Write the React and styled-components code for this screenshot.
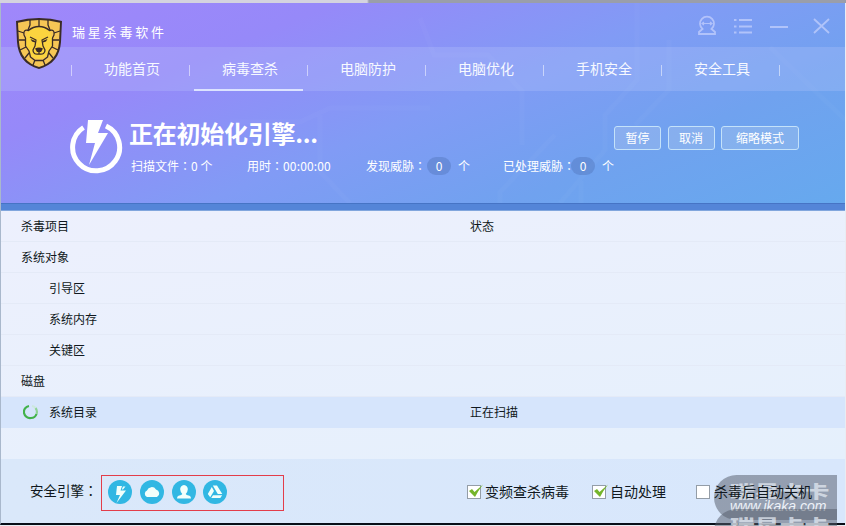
import styled, { createGlobalStyle, css } from "styled-components";

const tabs = ["功能首页", "病毒查杀", "电脑防护", "电脑优化", "手机安全", "安全工具"];

const rows = [
  { title: "系统对象" },
  { title: "引导区", child: true },
  { title: "系统内存", child: true },
  { title: "关键区", child: true },
  { title: "磁盘" },
  { title: "系统目录", child: true, active: true, status: "正在扫描" },
];

export default function App() {
  return (
    <>
      <GlobalStyle />
      <Desktop>
        <BackStrip />
        <Window>
          <Header>
            <Circuit />
            <TitleBar>
              <LionLogo />
              <AppName>瑞星杀毒软件</AppName>
              <WindowTools />
            </TitleBar>
            <Nav>
              {tabs.map((tab, i) => (
                <Tab key={tab}>
                  <TabLabel $active={i === 1}>{tab}</TabLabel>
                </Tab>
              ))}
              <TabEnd />
            </Nav>
            <Hero>
              <ScanIcon />
              <Info>
                <Heading>正在初始化引擎...</Heading>
                <Stats>
                  <Stat $width={116}>
                    扫描文件<Colon>：</Colon>0 个
                  </Stat>
                  <Stat $width={119}>
                    用时<Colon>：</Colon>
                    <Time>00:00:00</Time>
                  </Stat>
                  <Stat $width={137}>
                    发现威胁<Colon>：</Colon>
                    <Count>0</Count>个
                  </Stat>
                  <Stat $width={120}>
                    已处理威胁<Colon>：</Colon>
                    <Count $tight>0</Count>个
                  </Stat>
                </Stats>
              </Info>
              <Actions>
                <Button>暂停</Button>
                <Button>取消</Button>
                <Button $wide>缩略模式</Button>
              </Actions>
            </Hero>
          </Header>
          <Divider />
          <List>
            <Row>
              <Name>杀毒项目</Name>
              <Status>状态</Status>
            </Row>
            {rows.map((row) => (
              <Row key={row.title} $active={row.active}>
                <Name $child={row.child}>
                  {row.active && <Spinner />}
                  {row.title}
                </Name>
                <Status>{row.status}</Status>
              </Row>
            ))}
          </List>
          <Footer>
            <EngineLabel>
              安全引擎<Colon>：</Colon>
            </EngineLabel>
            <EngineBox>
              <EngineIcons />
            </EngineBox>
            <Option $width={125}>
              <CheckBox checked />
              变频查杀病毒
            </Option>
            <Option $width={104}>
              <CheckBox checked />
              自动处理
            </Option>
            <Option $width={130}>
              <CheckBox />
              杀毒后自动关机
            </Option>
          </Footer>
        </Window>
        <Watermark $top={475}>
          <MarkName>瑞星卡卡</MarkName>
          <MarkUrl>www.ikaka.com</MarkUrl>
        </Watermark>
        <Watermark $top={509}>
          <MarkName>瑞星卡卡</MarkName>
        </Watermark>
      </Desktop>
    </>
  );
}

function LionLogo() {
  return (
    <Logo width="48" height="53" viewBox="0 0 48 53">
      <path
        d="M1 4Q12 1 24 1Q36 1 47 4Q46.5 14 46 25C45 39 38 48 24 52C10 48 3 39 2 25Q1.5 14 1 4Z"
        fill="#3a2b26"
      />
      <path
        d="M3 5.8Q13 3 24 3Q35 3 45 5.8Q44.5 16 44 25C43 38 36 46.5 24 50C12 46.5 5 38 4 25Q3.5 16 3 5.8Z"
        fill="#f6c655"
      />
      <path
        d="M13 14Q18 10 24 10Q30 10 35 14L37 21L37 29L33 35L31 40L24 42L17 40L15 35L11 29L11 21Z"
        fill="#fbd43f"
      />
      <g fill="none" stroke="#3a2b26" strokeWidth="1.3" strokeLinejoin="round">
        <path d="M13.5 13.5Q18 9.5 24 9.5Q30 9.5 34.5 13.5Q40 12 39 18L37.5 21V29L34 34L32.5 40L28 43.5H20L15.5 40L14 34L10.5 29V21L9 18Q8 12 13.5 13.5Z" />
        <path d="M15 3V8L13 13M24 2V9M33 3V8L35 13M3 14L9 16M45 14L39 16M4 23H10M44 23H38M5 33L11 30M43 33L37 30M10 41L14 36M38 41L34 36M18 48L20 43M30 48L28 43" />
        <path d="M15 20L21 23L20 29L18 33Q18 38 24 37Q30 38 30 33L28 29L27 23L33 20M24 34V37" />
      </g>
      <path d="M15.5 22L20.5 24L20 25.5L17 24.5ZM32.5 22L27.5 24L28 25.5L31 24.5ZM20 31.5Q24 29.5 28 31.5L26 35H22Z" fill="#3a2b26" />
    </Logo>
  );
}

function WindowTools() {
  return (
    <Tools width="136" height="24" viewBox="696 14 136 24">
      <path d="M702.5 29A7 7 0 1 1 711.5 29L715 32V34H699V32Z" />
      <path d="M702 23.5H712M704 22L702 23.5L704 25M710 22L712 23.5L710 25" strokeWidth="1.2" />
      <path d="M734 20H736.5M734 26.5H736.5M734 32.5H736.5M739 20H752M739 26.5H752M739 32.5H752" />
      <path d="M770 27H788M814 19L829 33M829 19L814 33" />
    </Tools>
  );
}

function ScanIcon() {
  return (
    <ScanSvg width="54" height="56" viewBox="70 119 54 56">
      <path
        d="M83.5 127.5A23.5 23.5 0 1 0 106 126"
        fill="none"
        stroke="#fff"
        strokeWidth="5"
      />
      <path d="M88 120H103L98 133H108L89 165L95 143H86Z" fill="#fff" />
    </ScanSvg>
  );
}

function Spinner() {
  return (
    <SpinnerSvg width="16" height="16" viewBox="0 0 16 16" fill="none" strokeWidth="2.2">
      <path d="M6 2A6 6 0 0 0 8 14A6 6 0 0 0 13.5 10" stroke="#42b24b" />
      <path d="M13.5 10A6 6 0 0 0 12.5 4" stroke="#8ed394" />
      <path d="M12.5 4A6 6 0 0 0 9 2" stroke="#cce8dd" />
    </SpinnerSvg>
  );
}

function EngineIcons() {
  return (
    <svg width="120" height="24" viewBox="108 480 120 24">
      <g fill="#31b7e3">
        <circle cx="120" cy="492" r="12" />
        <circle cx="152" cy="492" r="12" />
        <circle cx="184" cy="492" r="12" />
        <circle cx="215" cy="492" r="12" />
      </g>
      <g fill="#f2fffb">
        <path d="M117 486H122L120.5 490.5H126L116.5 503L120 495H116Z" />
        <path d="M123 486.5H125.5L123 489.5H121.8Z" />
        <path d="M147 497A3.5 3.5 0 0 1 147 490.5A5 5 0 0 1 156 489.5A4 4 0 0 1 157 497Z" />
        <path d="M184 485A4 4 0 0 0 180.2 489.5Q180.5 492.5 182.3 494Q182 495 178.5 495.8Q177 496.5 177 498.5H191Q191 496.5 189.5 495.8Q186 495 185.7 494Q187.5 492.5 187.8 489.5A4 4 0 0 0 184 485Z" />
        <path d="M212.8 485.5H217L222.3 494H217.8ZM211.8 487L214 491L210.2 497.3L207.8 494ZM213 495.3H222.2L220.3 498H211.2Z" />
      </g>
    </svg>
  );
}

function CheckBox({ checked }) {
  return (
    <CheckSvg width="18" height="17" viewBox="0 0 18 17">
      <rect x="0.5" y="2.5" width="13" height="13" fill="#fff" stroke="#949da7" />
      {checked && <path d="M2 8L5 6L7.5 9L16 1.5Q11 8 8 14Z" fill="#75b52b" />}
    </CheckSvg>
  );
}

// faint board traces behind the header
function Circuit() {
  return (
    <CircuitSvg width="844" height="200" viewBox="1 3 844 200">
      <path d="M420 18L434 55H488L522 91V145M637 3V80L605 115V150L560 203M669 40V90L635 125M500 203V192L555 135M581 203V181M230 122H300L330 108H430M770 47L845 120M350 203L320 172V115" />
    </CircuitSvg>
  );
}

const GlobalStyle = createGlobalStyle`
  body {
    margin: 0;
    background: #e9edf3;
    font-family: "Noto Sans CJK SC", sans-serif;
    font-size: 12px;
    color: #101820;
  }
  * {
    box-sizing: border-box;
  }
`;

const Desktop = styled.div`
  position: relative;
  width: 846px;
  height: 526px;
  overflow: hidden;
  background: #e9edf3;
`;

const BackStrip = styled.div`
  height: 3px;
  background: linear-gradient(90deg, #d4d3df 0 367px, #9a9eaa 369px);
`;

const Window = styled.div`
  width: 845px;
  border-left: 1px solid #a9b8cc;
  border-bottom: 2px solid #080e18;
`;

const Header = styled.div`
  position: relative;
  height: 200px;
  background: linear-gradient(
    158deg,
    #a087fb 0%,
    #9689f9 25%,
    #819bf5 52%,
    #70a2ef 75%,
    #66a9ee 100%
  );
`;

const CircuitSvg = styled.svg`
  position: absolute;
  top: 0;
  left: 0;
  fill: none;
  stroke: rgba(255, 255, 255, 0.025);
  stroke-width: 5;
`;

const TitleBar = styled.div`
  display: flex;
  height: 44px;
  padding-left: 14px;
`;

const Logo = styled.svg`
  flex: none;
  position: relative;
  z-index: 1;
  margin-top: 14px;
`;

const AppName = styled.div`
  flex: 1;
  margin: 19px 0 0 9px;
  font-size: 13px;
  line-height: 20px;
  letter-spacing: 2.8px;
  color: #fff;
`;

const Tools = styled.svg`
  margin: 11px 13px 0 0;
  fill: none;
  stroke: rgba(213, 220, 255, 0.6);
  stroke-width: 1.8;
`;

const Nav = styled.div`
  display: flex;
  height: 44px;
  padding-left: 70px;
  background: rgba(190, 205, 250, 0.25);
`;

const Tab = styled.div`
  width: 118px;
  padding-left: 5px;
  background: linear-gradient(rgba(255, 255, 255, 0.5), rgba(255, 255, 255, 0.5)) 0 18px / 1px 11px no-repeat;
`;

const TabEnd = styled(Tab)`
  width: 1px;
  padding: 0;
`;

const TabLabel = styled.div`
  width: 109px;
  height: 44px;
  padding-left: 3px;
  line-height: 43px;
  text-align: center;
  font-size: 14px;
  color: #f7f9ff;
  border-bottom: ${(props) => (props.$active ? "2px solid #dce3ff" : "none")};
`;

const Hero = styled.div`
  display: flex;
  position: relative;
  height: 112px;
  padding: 28px 0 0 69px;
`;

const ScanSvg = styled.svg`
  flex: none;
`;

const Info = styled.div`
  width: 490px;
  padding-left: 5px;
  flex: none;
  color: #fff;
  white-space: nowrap;
`;

const Heading = styled.div`
  height: 31px;
  line-height: 27px;
  font-size: 24px;
  font-weight: 700;
  letter-spacing: -0.25px;
`;

const Stats = styled.div`
  display: flex;
  height: 32px;
  line-height: 32px;
  padding-left: 2px;
`;

const Stat = styled.div`
  flex: none;
  width: ${(props) => props.$width}px;
`;

const Time = styled.span`
  letter-spacing: 0.15px;
`;

// the TC face centres the full-width colon in its cell
const Colon = styled.span`
  font-family: "Noto Sans CJK TC", sans-serif;
`;

const Count = styled.span`
  display: inline-block;
  width: 24px;
  height: 18px;
  margin: 0 7px 0 ${(props) => (props.$tight ? "-4px" : "1px")};
  line-height: 18px;
  text-align: center;
  border-radius: 9px;
  background: rgba(75, 110, 180, 0.38);
`;

const Actions = styled.div`
  display: flex;
  align-items: flex-start;
  gap: 7px;
  padding-top: 7px;
  flex: none;
`;

const Button = styled.button`
  width: ${(props) => (props.$wide ? "78px" : "47px")};
  height: 24px;
  padding: 0;
  margin-right: ${(props) => (props.$wide ? "0" : "-0.5px")};
  font: 12px "Noto Sans CJK SC", sans-serif;
  line-height: 20px;
  color: #fff;
  background: rgba(205, 215, 235, 0.25);
  border: 1px solid #c4e2fa;
  border-radius: 3px;
`;

const Divider = styled.div`
  height: 8px;
  border-top: 1px solid #4674c5;
  border-bottom: 1px solid #81a6dd;
  background: #5485d8;
`;

const List = styled.div`
  height: 248px;
  background: linear-gradient(170deg, #edf0fd, #e5f0fc);
`;

const Row = styled.div`
  display: flex;
  height: 31px;
  line-height: 30px;
  border-bottom: 1px solid #e4eaf7;
  ${(props) =>
    props.$active &&
    css`
      background: #d6e5fc;
      border-color: #d6e5fc;
    `}
`;

const Name = styled.div`
  position: relative;
  width: 469px;
  padding-left: ${(props) => (props.$child ? "48px" : "20px")};
`;

const SpinnerSvg = styled.svg`
  position: absolute;
  top: 7px;
  left: 22px;
`;

const Status = styled.div`
  flex: 1;
`;

const Footer = styled.div`
  display: flex;
  height: 64px;
  padding: 16px 0 0 29px;
  background: linear-gradient(90deg, #dae8fa, #d8e7fc);
`;

const EngineLabel = styled.div`
  width: 71px;
  line-height: 31px;
  font-size: 13.5px;
  white-space: nowrap;
`;

const EngineBox = styled.div`
  width: 183px;
  height: 36px;
  padding: 4px 6px;
  margin-right: 183px;
  border: 1px solid #e33d4a;
`;

const Option = styled.label`
  position: relative;
  z-index: 1;
  display: flex;
  align-items: center;
  width: ${(props) => props.$width}px;
  height: 31px;
  font-size: 14px;
  white-space: nowrap;
`;

const CheckSvg = styled.svg`
  flex: none;
  margin-top: 2px;
`;

const Watermark = styled.div`
  position: absolute;
  top: ${(props) => props.$top}px;
  left: 714px;
  width: 123px;
  height: 45px;
  padding-top: 7px;
  border-radius: 23px 0 0 23px;
  background: rgba(87, 94, 108, 0.52);
`;

const MarkName = styled.div`
  height: 16px;
  width: 70px;
  margin-left: 16px;
  line-height: 17px;
  font-size: 17px;
  font-weight: 900;
  white-space: nowrap;
  transform: scaleX(1.46);
  transform-origin: 0 0;
  color: rgba(225, 231, 240, 0.75);
`;

const MarkUrl = styled.div`
  margin-left: 16px;
  font: italic 14px/16px "Liberation Sans", sans-serif;
  color: #eef2f8;
`;
